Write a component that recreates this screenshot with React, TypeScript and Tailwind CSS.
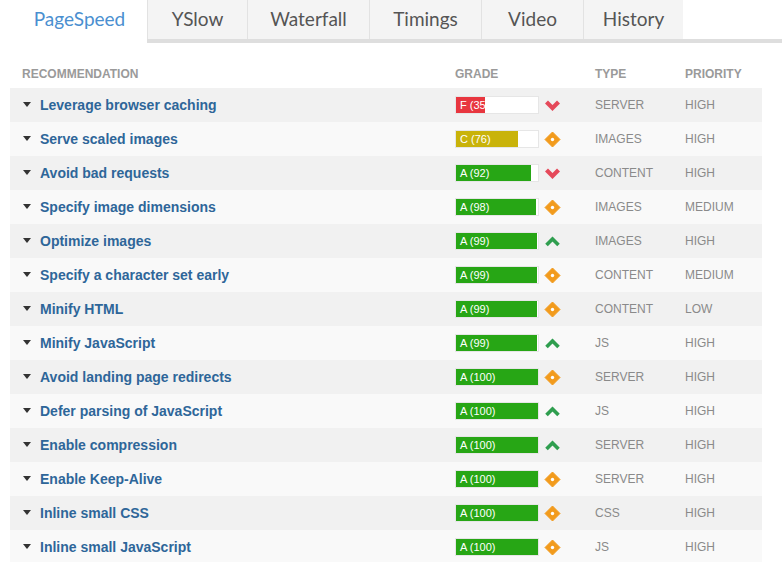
import React from "react";

type Row = {
  name: string;
  grade: string;
  score: number;
  color: string;
  icon: "down" | "diamond" | "up";
  type: string;
  priority: string;
};

const ROWS: Row[] = [
  { name: "Leverage browser caching", grade: "F (35)", score: 35, color: "#e8363f", icon: "down", type: "SERVER", priority: "HIGH" },
  { name: "Serve scaled images", grade: "C (76)", score: 76, color: "#c9b30a", icon: "diamond", type: "IMAGES", priority: "HIGH" },
  { name: "Avoid bad requests", grade: "A (92)", score: 92, color: "#27a615", icon: "down", type: "CONTENT", priority: "HIGH" },
  { name: "Specify image dimensions", grade: "A (98)", score: 98, color: "#27a615", icon: "diamond", type: "IMAGES", priority: "MEDIUM" },
  { name: "Optimize images", grade: "A (99)", score: 99, color: "#27a615", icon: "up", type: "IMAGES", priority: "HIGH" },
  { name: "Specify a character set early", grade: "A (99)", score: 99, color: "#27a615", icon: "diamond", type: "CONTENT", priority: "MEDIUM" },
  { name: "Minify HTML", grade: "A (99)", score: 99, color: "#27a615", icon: "diamond", type: "CONTENT", priority: "LOW" },
  { name: "Minify JavaScript", grade: "A (99)", score: 99, color: "#27a615", icon: "up", type: "JS", priority: "HIGH" },
  { name: "Avoid landing page redirects", grade: "A (100)", score: 100, color: "#27a615", icon: "diamond", type: "SERVER", priority: "HIGH" },
  { name: "Defer parsing of JavaScript", grade: "A (100)", score: 100, color: "#27a615", icon: "up", type: "JS", priority: "HIGH" },
  { name: "Enable compression", grade: "A (100)", score: 100, color: "#27a615", icon: "up", type: "SERVER", priority: "HIGH" },
  { name: "Enable Keep-Alive", grade: "A (100)", score: 100, color: "#27a615", icon: "diamond", type: "SERVER", priority: "HIGH" },
  { name: "Inline small CSS", grade: "A (100)", score: 100, color: "#27a615", icon: "diamond", type: "CSS", priority: "HIGH" },
  { name: "Inline small JavaScript", grade: "A (100)", score: 100, color: "#27a615", icon: "diamond", type: "JS", priority: "HIGH" },
];

const TABS = [
  { label: "PageSpeed", w: "w-[147px]" },
  { label: "YSlow", w: "w-[100px]" },
  { label: "Waterfall", w: "w-[122px]" },
  { label: "Timings", w: "w-[112px]" },
  { label: "Video", w: "w-[102px]" },
  { label: "History", w: "w-[100px]" },
];

function TrendIcon({ kind }: { kind: Row["icon"] }) {
  if (kind === "down") {
    return (
      <svg width="17" height="13" viewBox="0 0 17 13">
        <path d="M2.5 3 L8.5 9 L14.5 3" fill="none" stroke="#e5495a" strokeWidth="4.2" />
      </svg>
    );
  }
  if (kind === "up") {
    return (
      <svg width="17" height="13" viewBox="0 0 17 13">
        <path d="M2.5 10 L8.5 4 L14.5 10" fill="none" stroke="#2f9e4f" strokeWidth="3.6" />
      </svg>
    );
  }
  return (
    <svg width="17" height="17" viewBox="0 0 17 17">
      <path d="M8.5 1 L16 8.5 L8.5 16 L1 8.5 Z" fill="#f29b1d" stroke="#f29b1d" strokeWidth="1" strokeLinejoin="round" />
      <circle cx="8.5" cy="8.5" r="1.7" fill="#fff" />
    </svg>
  );
}

export default function App() {
  return (
    <div className="w-[782px] h-[562px] overflow-hidden bg-white font-['Liberation_Sans',Arial,sans-serif]">
      {/* Tabs */}
      <div className="flex h-[43px]">
        {TABS.map((t, i) =>
          i === 0 ? (
            <div key={t.label} className={`${t.w} h-full bg-white flex items-start justify-center pt-[5px] pl-[12px] text-[19px] text-[#4a8fd0] font-['Lato',sans-serif]`}>
              {t.label}
            </div>
          ) : (
            <div key={t.label} className={`${t.w} h-full flex flex-col`}>
              <div className="flex-1 bg-[#f4f4f4] border-l border-[#e2e2e2] flex items-start justify-center pt-[5px] text-[19px] text-[#555] font-['Lato',sans-serif]">
                {t.label}
              </div>
              <div className="h-[4px] bg-[#dedede]" />
            </div>
          )
        )}
        <div className="flex-1 h-full flex flex-col">
          <div className="flex-1 bg-white" />
          <div className="h-[4px] bg-[#dedede]" />
        </div>
      </div>

      {/* Table */}
      <div className="pl-[10px] w-[762px] pt-[22px]">
        <div className="flex h-[23px] items-start text-[12px] font-bold text-[#9a9a9a]">
          <div className="w-[445px] pl-[12px]">RECOMMENDATION</div>
          <div className="w-[140px]">GRADE</div>
          <div className="w-[90px]">TYPE</div>
          <div>PRIORITY</div>
        </div>
        {ROWS.map((r, i) => (
          <div key={r.name} className={`flex items-center h-[34px] ${i % 2 === 0 ? "bg-[#f1f1f1]" : "bg-[#f9f9f9]"}`}>
            <div className="w-[445px] flex items-center pl-[13px]">
              <svg width="8" height="6" viewBox="0 0 8 6" className="mr-[9px] mb-[1px]">
                <path d="M0 0 L8 0 L4 5 Z" fill="#333" />
              </svg>
              <span className="text-[14px] font-bold text-[#2e6699]">{r.name}</span>
            </div>
            <div className="w-[140px] flex items-center">
              <div className="relative w-[84px] h-[18px] bg-white border border-[#e6e6e6]">
                <div className="h-full" style={{ width: `${r.score}%`, backgroundColor: r.color }} />
                <span className="absolute left-[4px] top-[1px] text-[11px] leading-[14px] text-white">{r.grade}</span>
              </div>
              <div className="ml-[5px] w-[17px] flex justify-center">
                <TrendIcon kind={r.icon} />
              </div>
            </div>
            <div className="w-[90px] text-[12px] text-[#8a8a8a]">{r.type}</div>
            <div className="text-[12px] text-[#8a8a8a]">{r.priority}</div>
          </div>
        ))}
      </div>
    </div>
  );
}
